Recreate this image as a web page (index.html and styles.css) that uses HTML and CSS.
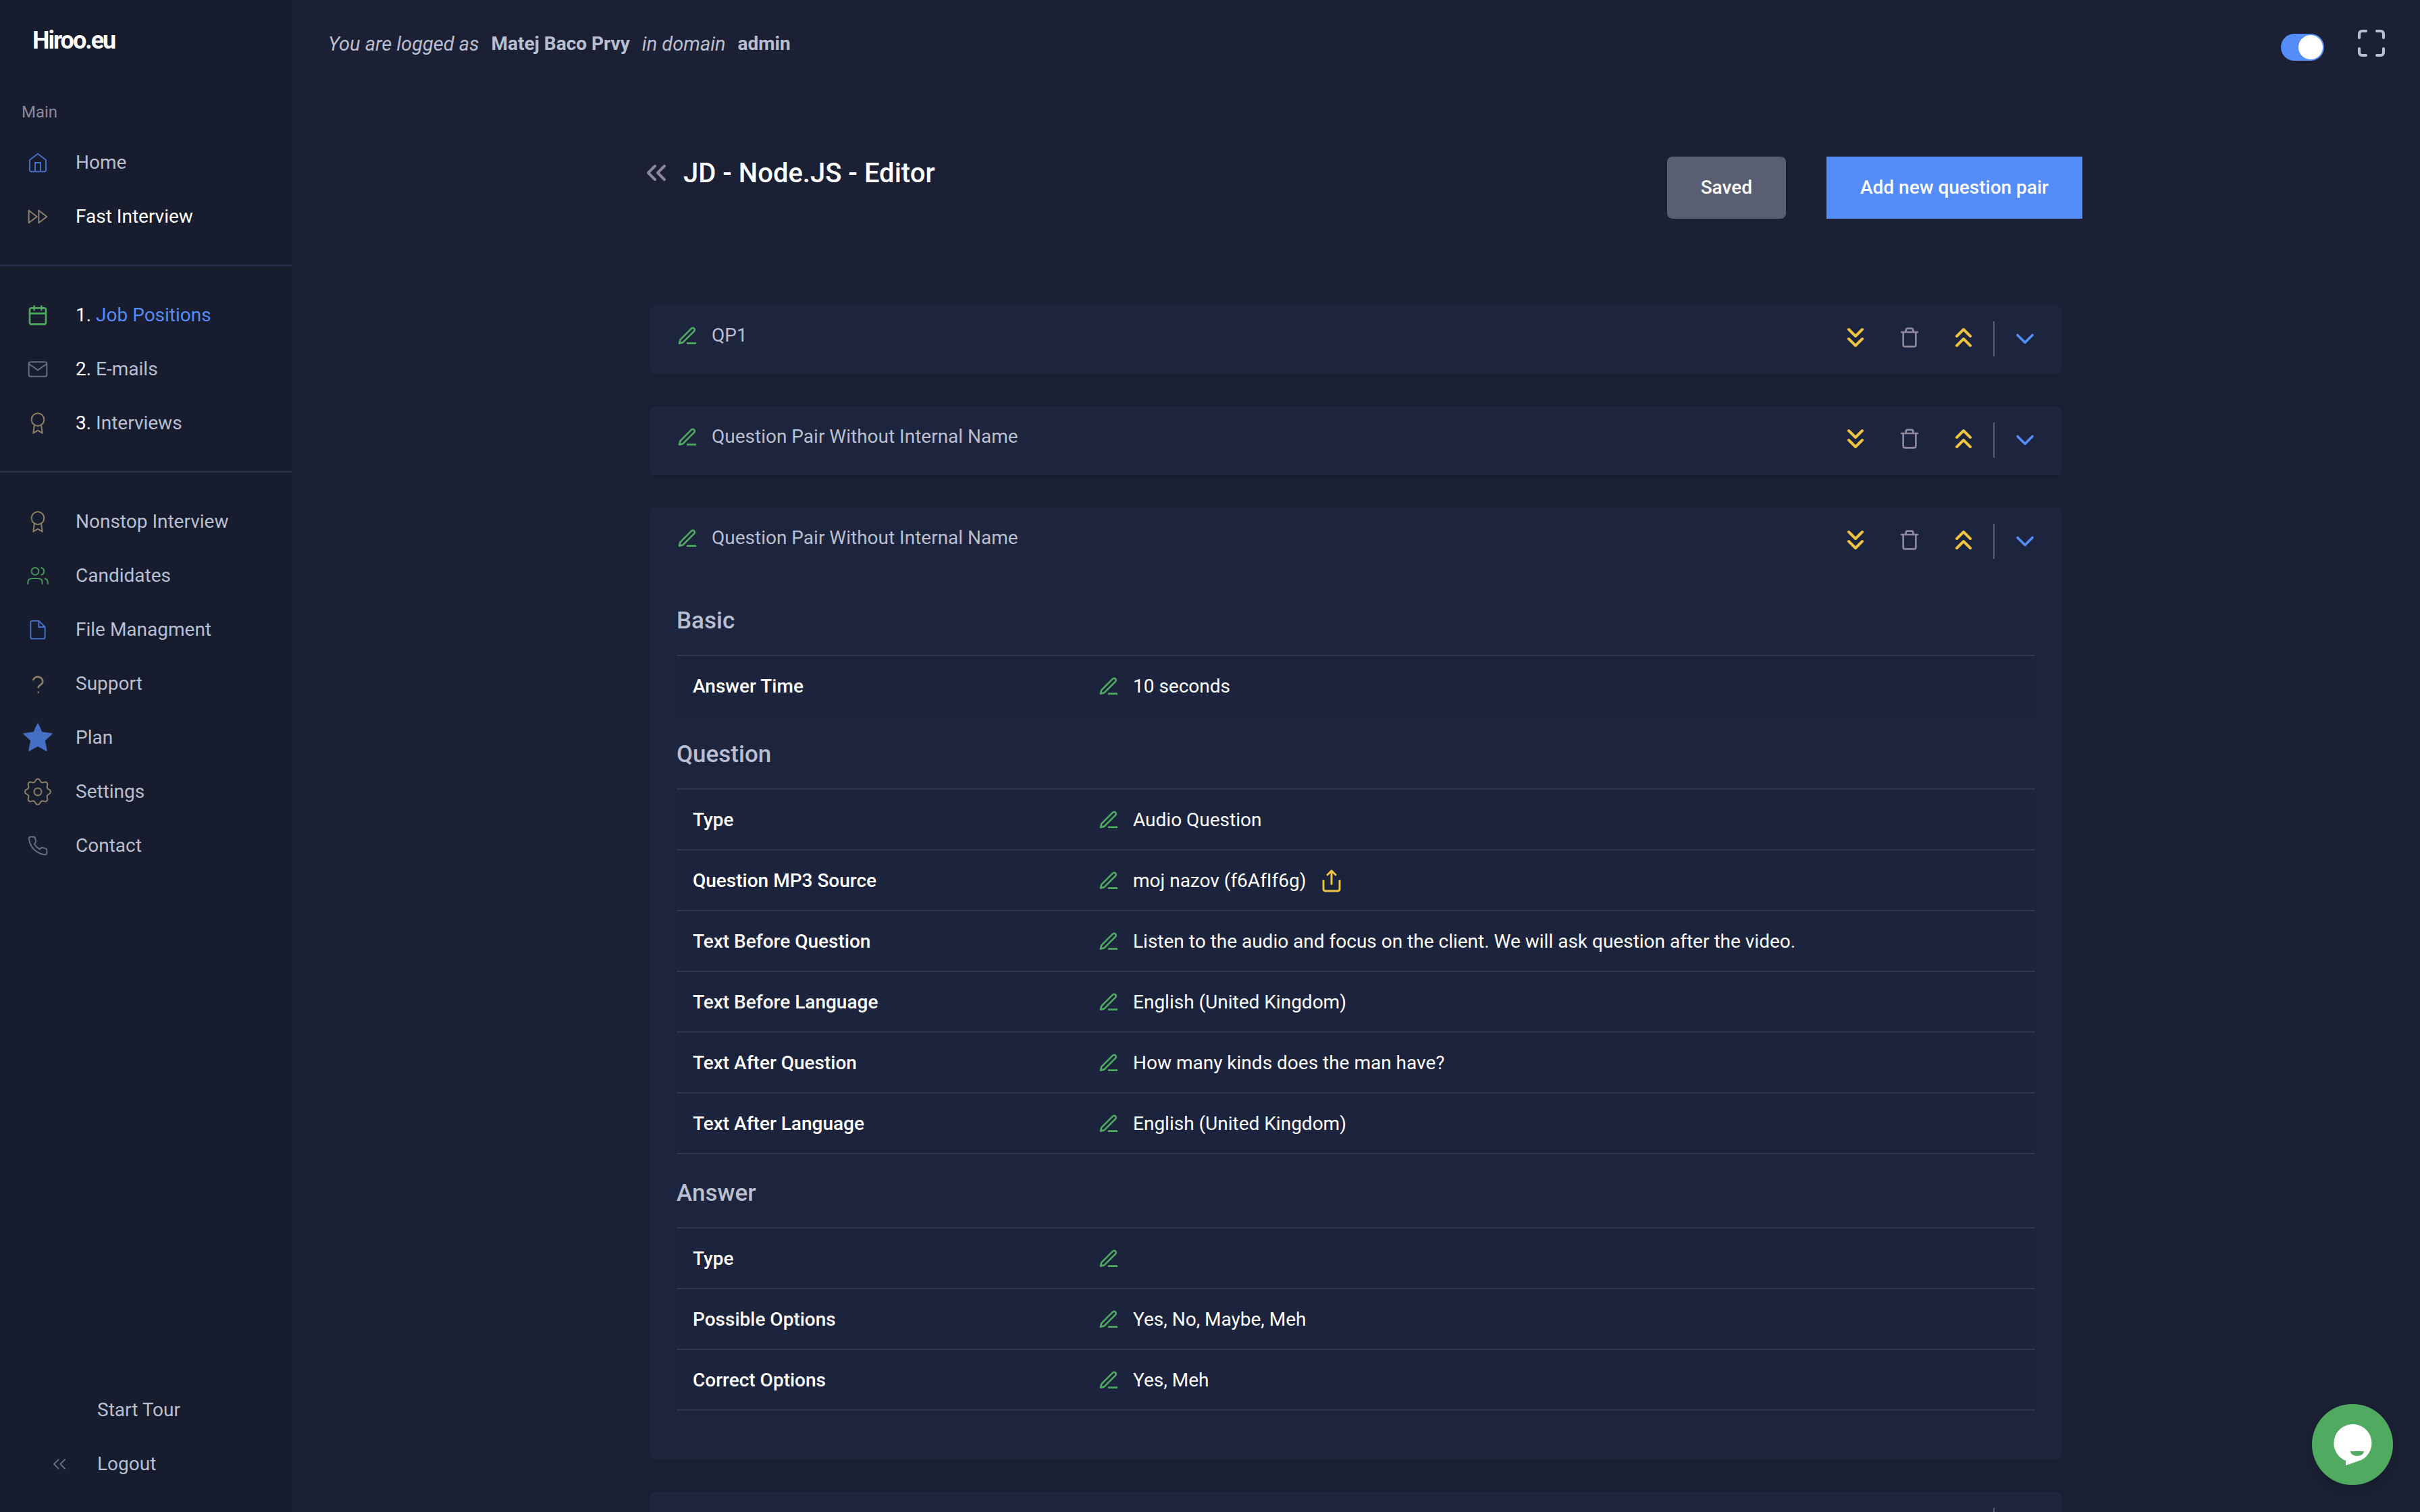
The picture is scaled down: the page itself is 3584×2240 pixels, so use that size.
FILE: index.html
```html
<!DOCTYPE html>
<html lang="en">
<head>
<meta charset="utf-8">
<title>Hiroo.eu - Editor</title>
<link rel="stylesheet" href="styles.css">
</head>
<body>
<svg class="sprite" aria-hidden="true">
  <symbol id="pen" viewBox="0 0 24 24"><path d="M12 20h9M16.500 3.500a2.121 2.121 0 0 1 3 3L7 19l-4 1 1-4z"/></symbol>
  <symbol id="down2" viewBox="0 0 24 24"><path d="m7 13 5 5 5-5M7 6l5 5 5-5"/></symbol>
  <symbol id="up2" viewBox="0 0 24 24"><path d="m17 11-5-5-5 5M17 18l-5-5-5 5"/></symbol>
  <symbol id="left2" viewBox="0 0 24 24"><path d="m11 17-5-5 5-5M18 17l-5-5 5-5"/></symbol>
  <symbol id="down" viewBox="0 0 24 24"><path d="m6 9 6 6 6-6"/></symbol>
  <symbol id="trash" viewBox="0 0 24 24"><path d="M3 6h18M19 6v14a2 2 0 0 1-2 2H7a2 2 0 0 1-2-2V6m3 0V4a2 2 0 0 1 2-2h4a2 2 0 0 1 2 2v2"/></symbol>
  <symbol id="award" viewBox="0 0 24 24"><circle cx="12" cy="8" r="7"/><path d="M8.210 13.890 7 23l5-3 5 3-1.210-9.120"/></symbol>
</svg>
<div class="app">
  <aside class="sidebar">
    <a class="logo" href="#">Hiroo.eu</a>
    <p class="caption">Main</p>
    <nav class="nav">
      <a href="#"><svg class="icon blue" viewBox="0 0 24 24"><path d="m3 9 9-7 9 7v11a2 2 0 0 1-2 2H5a2 2 0 0 1-2-2zM9 22V12h6v10"/></svg>Home</a>
      <a class="bright" href="#"><svg class="icon yellow" viewBox="0 0 24 24"><path d="m13 19 9-7-9-7zM2 19l9-7-9-7z"/></svg>Fast Interview</a>
      <hr>
      <a class="current" href="#"><svg class="icon green strong" viewBox="0 0 24 24"><rect x="3" y="4" width="18" height="18" rx="2"/><path d="M16 2v4M8 2v4M3 10h18"/></svg><span><b>1.</b> Job Positions</span></a>
      <a href="#"><svg class="icon gray" viewBox="0 0 24 24"><path d="M4 4h16c1.100 0 2 .9 2 2v12c0 1.100-.9 2-2 2H4c-1.100 0-2-.9-2-2V6c0-1.100.9-2 2-2zM22 6l-10 7L2 6"/></svg><span><b>2.</b> E-mails</span></a>
      <a href="#"><svg class="icon yellow"><use href="#award"/></svg><span><b>3.</b> Interviews</span></a>
      <hr>
      <a href="#"><svg class="icon yellow"><use href="#award"/></svg>Nonstop Interview</a>
      <a href="#"><svg class="icon green" viewBox="0 0 24 24"><path d="M17 21v-2a4 4 0 0 0-4-4H5a4 4 0 0 0-4 4v2M23 21v-2a4 4 0 0 0-3-3.870M16 3.130a4 4 0 0 1 0 7.750"/><circle cx="9" cy="7" r="4"/></svg>Candidates</a>
      <a href="#"><svg class="icon blue" viewBox="0 0 24 24"><path d="M13 2H6a2 2 0 0 0-2 2v16a2 2 0 0 0 2 2h12a2 2 0 0 0 2-2V9zM13 2v7h7"/></svg>File Managment</a>
      <a href="#"><svg class="icon yellow help" viewBox="0 0 24 24"><path d="M7 7.500a5.500 5.500 0 0 1 10.500 2c0 3.500-5 4-5 6.500M12.500 21.500v.1"/></svg>Support</a>
      <a href="#"><svg class="icon star" viewBox="0 0 44 44"><path d="m22 1 6 13 15 2-11 10 3 15-13-7-13 7 3-15L1 16l15-2z"/></svg>Plan</a>
      <a href="#"><svg class="icon yellow gear" viewBox="-22 -22 44 44"><defs><path id="tooth" d="M-5.700-13.900C-2.500-15.200-4-19 0-19S2.500-15.200 5.700-13.900"/></defs><use href="#tooth"/><use href="#tooth" transform="rotate(45)"/><use href="#tooth" transform="rotate(90)"/><use href="#tooth" transform="rotate(135)"/><use href="#tooth" transform="rotate(180)"/><use href="#tooth" transform="rotate(225)"/><use href="#tooth" transform="rotate(270)"/><use href="#tooth" transform="rotate(315)"/><circle r="5.500"/></svg>Settings</a>
      <a href="#"><svg class="icon gray" viewBox="0 0 24 24"><path d="M22 16.920v3a2 2 0 0 1-2.180 2 19.790 19.790 0 0 1-8.630-3.070 19.500 19.500 0 0 1-6-6 19.790 19.790 0 0 1-3.070-8.670A2 2 0 0 1 4.110 2h3a2 2 0 0 1 2 1.720 12.840 12.840 0 0 0 .7 2.810 2 2 0 0 1-.45 2.110L8.090 9.910a16 16 0 0 0 6 6l1.270-1.270a2 2 0 0 1 2.110-.45 12.840 12.840 0 0 0 2.810.7A2 2 0 0 1 22 16.920z"/></svg>Contact</a>
    </nav>
    <nav class="nav nav-foot">
      <a href="#"><span class="icon"></span>Start Tour</a>
      <a href="#"><svg class="icon gray"><use href="#left2"/></svg>Logout</a>
    </nav>
  </aside>

  <main class="main">
    <header class="topbar">
      <p class="who"><i>You are logged as</i><b>Matej Baco Prvy</b><i>in domain</i><b>admin</b></p>
      <input class="switch" type="checkbox" aria-label="Dark mode" checked>
      <button class="plain" aria-label="Full screen"><svg class="icon big light" viewBox="0 0 24 24"><path d="M8 3H5a2 2 0 0 0-2 2v3M21 8V5a2 2 0 0 0-2-2h-3M16 21h3a2 2 0 0 0 2-2v-3M3 16v3a2 2 0 0 0 2 2h3"/></svg></button>
    </header>

    <div class="content">
      <div class="heading">
        <a class="back" href="#" aria-label="Back"><svg class="icon big mauve"><use href="#left2"/></svg></a>
        <h1>JD - Node.JS - Editor</h1>
        <button class="btn saved">Saved</button>
        <button class="btn add">Add new question pair</button>
      </div>

      <div class="cards">
        <section class="card">
          <header class="card-head">
            <button class="plain" aria-label="Rename"><svg class="icon pen"><use href="#pen"/></svg></button><h2>QP1</h2>
            <div class="tools">
              <button class="plain" aria-label="Move down"><svg class="icon big gold"><use href="#down2"/></svg></button>
              <button class="plain" aria-label="Delete"><svg class="icon mauve trash"><use href="#trash"/></svg></button>
              <button class="plain" aria-label="Move up"><svg class="icon big gold"><use href="#up2"/></svg></button>
            </div>
            <button class="plain toggle" aria-label="Expand"><svg class="icon azure"><use href="#down"/></svg></button>
          </header>
        </section>

        <section class="card">
          <header class="card-head">
            <button class="plain" aria-label="Rename"><svg class="icon pen"><use href="#pen"/></svg></button><h2>Question Pair Without Internal Name</h2>
            <div class="tools">
              <button class="plain" aria-label="Move down"><svg class="icon big gold"><use href="#down2"/></svg></button>
              <button class="plain" aria-label="Delete"><svg class="icon mauve trash"><use href="#trash"/></svg></button>
              <button class="plain" aria-label="Move up"><svg class="icon big gold"><use href="#up2"/></svg></button>
            </div>
            <button class="plain toggle" aria-label="Expand"><svg class="icon azure"><use href="#down"/></svg></button>
          </header>
        </section>

        <section class="card">
          <header class="card-head">
            <button class="plain" aria-label="Rename"><svg class="icon pen"><use href="#pen"/></svg></button><h2>Question Pair Without Internal Name</h2>
            <div class="tools">
              <button class="plain" aria-label="Move down"><svg class="icon big gold"><use href="#down2"/></svg></button>
              <button class="plain" aria-label="Delete"><svg class="icon mauve trash"><use href="#trash"/></svg></button>
              <button class="plain" aria-label="Move up"><svg class="icon big gold"><use href="#up2"/></svg></button>
            </div>
            <button class="plain toggle" aria-label="Collapse"><svg class="icon azure"><use href="#down"/></svg></button>
          </header>
          <div class="card-body">
            <h3>Basic</h3>
            <table>
              <tr><th scope="row">Answer Time</th><td><div class="value"><button class="plain" aria-label="Edit"><svg class="icon pen"><use href="#pen"/></svg></button>10 seconds</div></td></tr>
            </table>
            <h3>Question</h3>
            <table class="closed">
              <tr><th scope="row">Type</th><td><div class="value"><button class="plain" aria-label="Edit"><svg class="icon pen"><use href="#pen"/></svg></button>Audio Question</div></td></tr>
              <tr><th scope="row">Question MP3 Source</th><td><div class="value"><button class="plain" aria-label="Edit"><svg class="icon pen"><use href="#pen"/></svg></button>moj nazov (f6AfIf6g)<a href="#" aria-label="Open file"><svg class="icon gold share" viewBox="0 0 24 24"><path d="M4 12v8a2 2 0 0 0 2 2h12a2 2 0 0 0 2-2v-8M16 6l-4-4-4 4M12 2v13"/></svg></a></div></td></tr>
              <tr><th scope="row">Text Before Question</th><td><div class="value"><button class="plain" aria-label="Edit"><svg class="icon pen"><use href="#pen"/></svg></button>Listen to the audio and focus on the client. We will ask question after the video.</div></td></tr>
              <tr><th scope="row">Text Before Language</th><td><div class="value"><button class="plain" aria-label="Edit"><svg class="icon pen"><use href="#pen"/></svg></button>English (United Kingdom)</div></td></tr>
              <tr><th scope="row">Text After Question</th><td><div class="value"><button class="plain" aria-label="Edit"><svg class="icon pen"><use href="#pen"/></svg></button>How many kinds does the man have?</div></td></tr>
              <tr><th scope="row">Text After Language</th><td><div class="value"><button class="plain" aria-label="Edit"><svg class="icon pen"><use href="#pen"/></svg></button>English (United Kingdom)</div></td></tr>
            </table>
            <h3>Answer</h3>
            <table class="closed">
              <tr><th scope="row">Type</th><td><div class="value"><button class="plain" aria-label="Edit"><svg class="icon pen"><use href="#pen"/></svg></button></div></td></tr>
              <tr><th scope="row">Possible Options</th><td><div class="value"><button class="plain" aria-label="Edit"><svg class="icon pen"><use href="#pen"/></svg></button>Yes, No, Maybe, Meh</div></td></tr>
              <tr><th scope="row">Correct Options</th><td><div class="value"><button class="plain" aria-label="Edit"><svg class="icon pen"><use href="#pen"/></svg></button>Yes, Meh</div></td></tr>
            </table>
          </div>
        </section>

        <section class="card">
          <header class="card-head">
            <button class="plain" aria-label="Rename"><svg class="icon pen"><use href="#pen"/></svg></button><h2></h2>
            <div class="tools">
              <button class="plain" aria-label="Move down"><svg class="icon big gold"><use href="#down2"/></svg></button>
              <button class="plain" aria-label="Delete"><svg class="icon mauve trash"><use href="#trash"/></svg></button>
              <button class="plain" aria-label="Move up"><svg class="icon big gold"><use href="#up2"/></svg></button>
            </div>
            <button class="plain toggle" aria-label="Expand"><svg class="icon azure"><use href="#down"/></svg></button>
          </header>
        </section>
      </div>
    </div>
  </main>
</div>
<button class="chat" aria-label="Open chat"><svg viewBox="0 0 120 120"><path class="bubble" d="M60 30a28 28 0 0 1 13 53L50 91v-7A28 28 0 0 1 60 30z"/><path class="smile" d="M57 70h20a10 7 0 0 1-20 0z"/></svg></button>
</body>
</html>
```

FILE: styles.css
```css
* { box-sizing: border-box; }

body {
  margin: 0;
  height: 100vh;
  overflow: hidden;
  background: #1b2035;
  color: #fff;
  font: 28px/40px Roboto, "Liberation Sans", sans-serif;
}

h1, h2, h3, p { margin: 0; }
a { color: inherit; text-decoration: none; }

.sprite { position: absolute; width: 0; height: 0; }

.app { display: flex; height: 100vh; }

/* Icons */
.icon {
  display: block;
  flex: none;
  width: 32px;
  height: 32px;
  fill: none;
  stroke: currentColor;
  stroke-width: 2;
  stroke-linecap: round;
  stroke-linejoin: round;
}
.icon.big { width: 48px; height: 48px; }
.pen { color: #4faa61; }
.gold { color: #efc440; }
.mauve { color: #8f889d; }
.light { color: #b9bfd0; }
.azure { color: #548cf8; width: 44px; height: 44px; }
.share { width: 36px; height: 36px; }

.plain {
  display: block;
  padding: 0;
  border: 0;
  background: none;
  color: inherit;
  cursor: pointer;
}

/* Sidebar */
.sidebar {
  display: flex;
  flex: none;
  flex-direction: column;
  width: 432px;
  background: #171c2f;
  color: #b9bfd0;
}
.logo {
  padding: 40px 48px 0;
  color: #fff;
  font-size: 36px;
  font-weight: 700;
  letter-spacing: -2px;
}
.caption {
  padding: 66px 32px 14px;
  color: #8f889d;
  font-size: 24px;
}
.nav a {
  display: flex;
  align-items: center;
  gap: 40px;
  height: 80px;
  padding: 2px 0 0 40px;
}
.nav b { color: #fff; font-weight: 400; }
.nav .bright { color: #fff; }
.nav .current { color: #548cf8; }
.nav hr {
  height: 2px;
  margin: 32px 0;
  border: 0;
  background: #28344f;
}
.nav .icon { stroke-width: 1.5; }
.nav .strong { stroke-width: 2; }
.nav .blue { color: #456fc4; }
.nav .yellow { color: #8c7f68; }
.nav .green { color: #479657; }
.nav .strong { color: #4faa61; }
.nav .gray { color: #686d83; }
.nav .help { stroke-width: 2; }
.nav .star, .nav .gear { width: 44px; height: 44px; margin: 0 -6px; }
.nav .star { fill: #456fc4; stroke: #456fc4; }
.nav .gear { stroke-width: 2; }
.nav-foot { margin-top: auto; padding: 0 0 32px 32px; }

/* Top bar */
.main { flex: 1; min-width: 0; }
.topbar {
  display: flex;
  align-items: center;
  height: 128px;
  padding: 0 48px 0 54px;
  color: #b9bfd0;
}
.who { display: flex; flex: 1; gap: 18px; padding-top: 2px; }
.who i { font-size: 29px; }
.who b { font-weight: 700; }
.switch {
  width: 64px;
  height: 40px;
  margin: 12px 46px 0 0;
  border-radius: 20px;
  background: #548cf8;
  appearance: none;
}
.switch::before {
  content: "";
  display: block;
  width: 36px;
  height: 36px;
  margin: 2px 2px 2px auto;
  border-radius: 50%;
  background: #fff;
}

/* Page heading */
.content { max-width: 2152px; margin: 0 auto; padding-top: 104px; }
.heading {
  display: flex;
  align-items: flex-start;
  height: 220px;
  padding-left: 16px;
}
h1 { flex: 1; padding-left: 16px; font-size: 40px; line-height: 50px; font-weight: 500; }
.btn {
  padding: 26px 50px;
  border: 0;
  color: #fff;
  font: 500 28px/40px Roboto, "Liberation Sans", sans-serif;
}
.saved { margin-right: 60px; border-radius: 8px; background: #5a5e73; }
.add { background: #548cf8; }

/* Question pair cards */
.cards { display: flex; flex-direction: column; gap: 48px; padding: 0 30px; }
.card {
  border-radius: 8px;
  background: #1d243d;
  box-shadow: 0 2px 4px rgba(0, 0, 0, .12);
}
.card-head {
  display: flex;
  align-items: flex-start;
  height: 102px;
  padding: 24px 32px 0 40px;
  border-bottom: 1px solid #20273f;
}
.card-head .pen { margin: 6px 20px 0 0; }
h2 { flex: 1; font-size: 28px; line-height: 42px; font-weight: 400; color: #b9bfd0; }
.tools { display: flex; gap: 32px; margin-right: 20px; }
.tools .trash { margin: 5px 8px; }
.toggle { height: 52px; padding: 0 1px 0 23px; border-left: 2px solid #5a5e73; }

.card-body { padding: 8px 40px 72px; }
h3 {
  padding: 36px 0 28px;
  color: #b9bfd0;
  font-size: 35px;
  line-height: 44px;
  font-weight: 500;
}
table { width: 100%; border-collapse: separate; border-spacing: 0; background: #1c233c; }
th, td { height: 90px; padding: 2px 24px 0; border-top: 2px solid #2e3650; text-align: left; }
th { width: 600px; font-weight: 500; }
.closed tr:last-child > * { height: 92px; border-bottom: 2px solid #2e3650; }
.value { display: flex; align-items: center; }
.value .pen { margin-right: 20px; }
.share { margin-left: 20px; }

/* Chat launcher */
.chat {
  position: fixed;
  right: 40px;
  bottom: 40px;
  width: 120px;
  height: 120px;
  padding: 0;
  border: 0;
  border-radius: 50%;
  background: #50ab61;
  box-shadow: 0 8px 24px rgba(0, 0, 0, .16);
}
.chat svg { display: block; }
.bubble { fill: #fff; }
.smile { fill: #50ab61; }
```
